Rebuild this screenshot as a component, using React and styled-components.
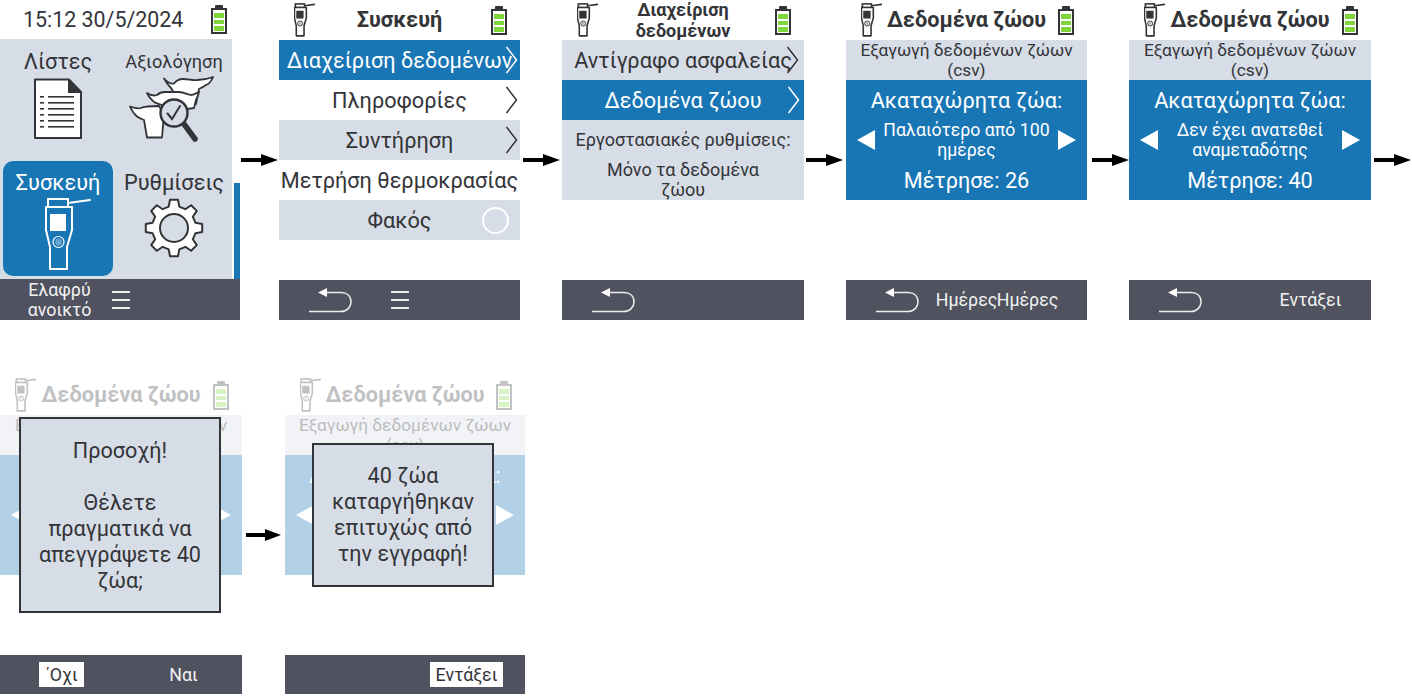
import React from "react";
import styled, { createGlobalStyle } from "styled-components";

const DARK = "#333438";
const GREY = "#d6dde6";
const BLUE = "#1976b5";
const BAR = "#50525f";

const GlobalStyle = createGlobalStyle`
  html, body {
    margin: 0;
    background: #fff;
    overflow: hidden;
  }
  body {
    font-family: Roboto, "Noto Sans", sans-serif;
    color: ${DARK};
  }
`;

const gearPath = (() => {
  const teeth = 8;
  const pts = [];
  for (let i = 0; i < teeth; i++) {
    const a = (i * Math.PI * 2) / teeth - Math.PI / 2;
    const step = Math.PI / teeth;
    const pt = (r, ang) => `${(30 + r * Math.cos(ang)).toFixed(1)} ${(30 + r * Math.sin(ang)).toFixed(1)}`;
    pts.push(pt(22, a - step * 0.62), pt(28.5, a - step * 0.36), pt(28.5, a + step * 0.36), pt(22, a + step * 0.62));
  }
  return `M${pts.join(" L")}Z`;
})();

const BatteryIcon = () => (
  <svg width="16" height="29" viewBox="0 0 16 29">
    <rect x="4" y="0" width="8" height="4" rx="1" fill={DARK} />
    <rect x="1" y="4" width="14" height="24" fill="#fff" stroke={DARK} strokeWidth="2" />
    <rect x="3" y="8" width="10" height="5" fill="#7ed63c" />
    <rect x="3" y="15" width="10" height="4" fill="#7ed63c" />
    <rect x="3" y="21" width="10" height="5" fill="#7ed63c" />
  </svg>
);

const DeviceIcon = ({ width, color, fill, screen, weight }) => (
  <svg width={width} viewBox="0 0 46 74" style={{ display: "block" }}>
    <path d="M23 6 L45 3" stroke={color} strokeWidth={weight} strokeLinecap="round" fill="none" />
    <rect x="3" y="2" width="20" height="8" fill={fill} stroke={color} strokeWidth={weight} />
    <path
      d="M1 10 H27 V33 L22 50 V72 H5 V50 L1 33Z"
      fill={fill}
      stroke={color}
      strokeWidth={weight}
      strokeLinejoin="round"
    />
    <rect x="5" y="17" width="16" height="17" fill={screen} />
    <circle cx="13.5" cy="45" r="5.5" fill="none" stroke={color} strokeWidth={weight * 0.6} />
    <circle cx="13.5" cy="45" r="3.4" fill={color} fillOpacity="0.35" />
  </svg>
);

const DocIcon = () => (
  <svg width="50" height="62" viewBox="0 0 50 62">
    <path d="M2 1.5 H36 L48 14 V60 H2Z" fill="#fff" stroke={DARK} strokeWidth="2" strokeLinejoin="round" />
    <path d="M35 1 L49 15 H35Z" fill={DARK} />
    {[18, 24, 30, 36, 42, 48].map((y) => (
      <g key={y}>
        <rect x="7" y={y} width="4" height="1.6" fill={DARK} />
        <rect x="15" y={y} width="26" height="1.6" fill={DARK} />
      </g>
    ))}
  </svg>
);

const CowsIcon = () => (
  <svg width="90" height="70" viewBox="0 0 90 70">
    <g fill="#fff" stroke={DARK} strokeWidth="1.8" strokeLinejoin="round">
      <path d="M35 2.5 C38 6 42 8 45 7.5 C47 5 50 3 54 3 C60 3 64 5 68 4 C73 4 79 3 84 1 C82 6 80 8 77 9 C74 11 72 12 70 13 L67 28 L52 28 L42 12 C39 9 37 6 35 2.5Z" />
      <path d="M18 17 C21 19 25 20 28 19 C30 17 33 16 36 16 L50 16 C54 16 58 18 62 19 C65 19 67 17 70 16 C69 20 68 22 67 24 L65 32 L38 36 L33 29 C29 28 25 27 23 24 C21 22 19 20 18 17Z" />
      <path d="M1 30.5 C5 32 9 33 12 32 C14 31 16 31 18 30.5 L30 30 L35 38 L33 61.5 L18 61.5 L15 44 C12 43 10 42 8 40.5 C5 38 3 35 1 30.5Z" />
    </g>
    <path d="M55 48 L66 63" stroke={DARK} strokeWidth="5.5" strokeLinecap="round" />
    <circle cx="45" cy="37" r="13.5" fill={GREY} stroke={DARK} strokeWidth="2.4" />
    <path d="M38.5 37.5 L43 43 L51 30" fill="none" stroke={DARK} strokeWidth="2" strokeLinecap="round" />
  </svg>
);

const GearIcon = () => (
  <svg width="60" height="60" viewBox="0 0 60 60">
    <path d={gearPath} fill="#fff" stroke={DARK} strokeWidth="2" strokeLinejoin="round" />
    <circle cx="30" cy="30" r="14" fill={GREY} stroke={DARK} strokeWidth="2" />
  </svg>
);

const BackSvg = styled.svg`
  margin-right: 16px;
  flex: none;
`;

const BackIcon = () => (
  <BackSvg width="44" height="26" viewBox="0 0 44 26">
    <path d="M0 24.5 H32 C38 24.5 42 20 42 15 C42 9 38 5.5 32 5.5 H16" fill="none" stroke="#eee" strokeWidth="1.5" />
    <path d="M9 5.5 L18 1 V10Z" fill="#fff" />
  </BackSvg>
);

const Burger = () => (
  <svg width="18" height="18" viewBox="0 0 18 18">
    <rect y="0" width="18" height="2" fill="#eee" />
    <rect y="8" width="18" height="2" fill="#eee" />
    <rect y="16" width="18" height="2" fill="#eee" />
  </svg>
);

const ArrowIcon = ({ width }) => (
  <svg width={width} height="12" viewBox="0 0 37 12" preserveAspectRatio="none">
    <rect x="0" y="4" width="22" height="4" fill="#000" />
    <path d="M20 0 L37 6 L20 12Z" fill="#000" />
  </svg>
);

const ChevronSvg = styled.svg`
  position: absolute;
  right: ${(p) => p.$right || 2}px;
  top: 6px;
`;

const Chevron = ({ right, color }) => (
  <ChevronSvg $right={right} width="13" height="28" viewBox="0 0 13 28">
    <path d="M1.5 1 L11.5 14 L1.5 27" fill="none" stroke={color} strokeWidth="1.5" />
  </ChevronSvg>
);

const Page = styled.div`
  display: flex;
  flex-direction: column;
  gap: 55px;
  width: 1412px;
  height: 697px;
  overflow: hidden;
`;

const Flow = styled.div`
  display: flex;
  align-items: center;
`;

const ArrowSlot = styled.div`
  flex: none;
  display: flex;
  align-items: center;
  width: ${(p) => p.$width}px;
  padding-left: ${(p) => p.$pad}px;
  box-sizing: border-box;
`;

const Screen = styled.div`
  position: relative;
  flex: none;
  width: ${(p) => p.$width}px;
  display: grid;
  grid-template-rows: ${(p) => p.$rows || "40px 240px 40px"};
`;

const Header = styled.div`
  display: flex;
  align-items: center;
  justify-content: space-between;
  padding: 0 13px 0 15px;
  opacity: ${(p) => (p.$faded ? 0.3 : 1)};
`;

const Clock = styled.div`
  font-size: 21.4px;
  padding-left: 8px;
`;

const Title = styled.div`
  flex: 1;
  margin-right: 7px;
  font-weight: 700;
  font-size: ${(p) => p.$size || 21.7}px;
  line-height: ${(p) => (p.$size ? "21px" : "40px")};
  text-align: center;
  white-space: nowrap;
`;

const Content = styled.div`
  display: flex;
  flex-direction: column;
  opacity: ${(p) => (p.$faded ? 0.33 : 1)};
`;

const Row = styled.div`
  position: relative;
  flex: none;
  height: 40px;
  box-sizing: border-box;
  display: flex;
  align-items: center;
  justify-content: center;
  font-size: ${(p) => p.$size || 21.7}px;
  line-height: ${(p) => (p.$size ? "20px" : "26px")};
  text-align: center;
  padding: ${(p) => (p.$size ? 0 : 2)}px ${(p) => p.$pad || 0}px 0;
  background: ${(p) => (p.$tone === "blue" ? BLUE : p.$tone === "grey" ? GREY : "transparent")};
  color: ${(p) => (p.$tone === "blue" ? "#fff" : DARK)};
`;

const Label = styled.span`
  white-space: nowrap;
`;

const Toggle = styled.span`
  position: absolute;
  right: 11px;
  top: 7px;
  width: 23px;
  height: 23px;
  border: 2px solid #fff;
  border-radius: 50%;
`;

const Selector = styled.div`
  display: flex;
  align-items: center;
  justify-content: space-between;
  width: 100%;
  height: 40px;
  padding: 0 11px;
  box-sizing: border-box;
  background: ${BLUE};
  color: #fff;
  font-size: 17.7px;
  line-height: 19.5px;
  text-align: center;
`;

const SelectorText = styled.div`
  flex: 1;
  padding: 1px 4px 0;
`;

const Triangle = styled.span`
  flex: none;
  width: 0;
  height: 0;
  border-top: 10px solid transparent;
  border-bottom: 10px solid transparent;
  ${(p) => (p.$dir === "left" ? "border-right: 18px solid #fff;" : "border-left: 18px solid #fff;")}
`;

const Footer = styled.div`
  display: grid;
  grid-template-columns: repeat(3, 61px);
  align-items: center;
  padding-left: ${(p) => p.$left || 29}px;
  background: ${BAR};
  color: #f2f2f2;
  font-size: 17.8px;
  line-height: 20px;
`;

const FootSlot = styled.div`
  grid-column: ${(p) => p.$col};
  display: flex;
  justify-content: center;
  text-align: center;
  white-space: nowrap;
`;

const FootButton = styled.span`
  flex: none;
  display: block;
  padding: 0 6px;
  line-height: 25px;
  background: #fff;
  color: ${DARK};
`;

const Menu = styled.div`
  display: flex;
`;

const MenuGrid = styled.div`
  flex: none;
  width: 232px;
  height: 240px;
  box-sizing: border-box;
  padding: 0 0 3px 3px;
  background: ${GREY};
  display: grid;
  grid-template-columns: 110px 1fr;
  grid-template-rows: 122px 115px;
  column-gap: 3px;
`;

const Tile = styled.div`
  display: flex;
  flex-direction: column;
  align-items: center;
  padding-top: ${(p) => p.$top}px;
  border-radius: 10px;
  background: ${(p) => (p.$active ? BLUE : "transparent")};
  color: ${(p) => (p.$active ? "#fff" : DARK)};
`;

const TileLabel = styled.div`
  font-size: ${(p) => p.$size || 21.8}px;
  line-height: 26px;
  margin-bottom: ${(p) => p.$gap || 0}px;
  white-space: nowrap;
`;

const TileDevice = styled.div`
  margin-left: 20px;
`;

const ScrollThumb = styled.div`
  align-self: flex-end;
  width: 6px;
  height: 96px;
  margin-left: 2px;
  background: ${BLUE};
`;

const Dialog = styled.div`
  position: absolute;
  left: ${(p) => p.$left}px;
  top: ${(p) => p.$top}px;
  width: ${(p) => p.$width}px;
  height: ${(p) => p.$height}px;
  box-sizing: border-box;
  padding-top: ${(p) => p.$pad}px;
  border: 2.5px solid ${DARK};
  background: ${GREY};
  font-size: 21.6px;
  line-height: 26px;
  text-align: center;
`;

const AnimalHeader = ({ faded }) => (
  <Header $faded={faded}>
    <DeviceIcon width={21} color={DARK} fill="#fff" screen={DARK} weight={3.5} />
    <Title>Δεδομένα ζώου</Title>
    <BatteryIcon />
  </Header>
);

const AnimalPanel = ({ faded, filter, count }) => (
  <Content $faded={faded}>
    <Row $tone="grey" $size={17.3}>
      Εξαγωγή δεδομένων ζώων (csv)
    </Row>
    <Row $tone="blue">Ακαταχώρητα ζώα:</Row>
    <Selector>
      <Triangle $dir="left" />
      <SelectorText>{filter}</SelectorText>
      <Triangle $dir="right" />
    </Selector>
    <Row $tone="blue">Μέτρησε: {count}</Row>
  </Content>
);

const Arrow = ({ width, pad, size = 37 }) => (
  <ArrowSlot $width={width} $pad={pad}>
    <ArrowIcon width={size} />
  </ArrowSlot>
);

const App = () => {
  return (
    <>
      <GlobalStyle />
      <Page>
        <Flow>
          <Screen $width={240} $rows="39px 240px 41px">
            <Header>
              <Clock>15:12 30/5/2024</Clock>
              <BatteryIcon />
            </Header>
            <Menu>
              <MenuGrid>
                <Tile $top={10}>
                  <TileLabel $gap={3}>Λίστες</TileLabel>
                  <DocIcon />
                </Tile>
                <Tile $top={10}>
                  <TileLabel $size={18.2} $gap={1}>
                    Αξιολόγηση
                  </TileLabel>
                  <CowsIcon />
                </Tile>
                <Tile $top={9} $active>
                  <TileLabel $gap={1}>Συσκευή</TileLabel>
                  <TileDevice>
                    <DeviceIcon width={46} color="#fff" fill="none" screen="#fff" weight={2} />
                  </TileDevice>
                </Tile>
                <Tile $top={9}>
                  <TileLabel $gap={2}>Ρυθμίσεις</TileLabel>
                  <GearIcon />
                </Tile>
              </MenuGrid>
              <ScrollThumb />
            </Menu>
            <Footer>
              <FootSlot $col={1}>
                Ελαφρύ
                <br />
                ανοικτό
              </FootSlot>
              <FootSlot $col={2}>
                <Burger />
              </FootSlot>
            </Footer>
          </Screen>
          <Arrow width={39} pad={1} />

          <Screen $width={241}>
            <Header>
              <DeviceIcon width={21} color={DARK} fill="#fff" screen={DARK} weight={3.5} />
              <Title>Συσκευή</Title>
              <BatteryIcon />
            </Header>
            <Content>
              <Row $tone="blue">
                <Label>Διαχείριση δεδομένων</Label>
                <Chevron color="#fff" />
              </Row>
              <Row>
                <Label>Πληροφορίες</Label>
                <Chevron color={DARK} />
              </Row>
              <Row $tone="grey">
                <Label>Συντήρηση</Label>
                <Chevron color={DARK} />
              </Row>
              <Row>
                <Label>Μετρήση θερμοκρασίας</Label>
              </Row>
              <Row $tone="grey">
                <Label>Φακός</Label>
                <Toggle />
              </Row>
            </Content>
            <Footer>
              <FootSlot $col={1}>
                <BackIcon />
              </FootSlot>
              <FootSlot $col={2}>
                <Burger />
              </FootSlot>
            </Footer>
          </Screen>
          <Arrow width={42} pad={3} />

          <Screen $width={242}>
            <Header>
              <DeviceIcon width={21} color={DARK} fill="#fff" screen={DARK} weight={3.5} />
              <Title $size={18}>
                Διαχείριση
                <br />
                δεδομένων
              </Title>
              <BatteryIcon />
            </Header>
            <Content>
              <Row $tone="grey">
                <Label>Αντίγραφο ασφαλείας</Label>
                <Chevron color={DARK} right={5} />
              </Row>
              <Row $tone="blue">
                <Label>Δεδομένα ζώου</Label>
                <Chevron color="#fff" right={4} />
              </Row>
              <Row $tone="grey" $size={18}>
                <Label>Εργοστασιακές ρυθμίσεις:</Label>
              </Row>
              <Row $tone="grey" $size={18} $pad={30}>
                Μόνο τα δεδομένα ζώου
              </Row>
            </Content>
            <Footer>
              <FootSlot $col={1}>
                <BackIcon />
              </FootSlot>
            </Footer>
          </Screen>
          <Arrow width={42} pad={2} />

          <Screen $width={241}>
            <AnimalHeader />
            <AnimalPanel filter="Παλαιότερο από 100 ημέρες" count={26} />
            <Footer>
              <FootSlot $col={1}>
                <BackIcon />
              </FootSlot>
              <FootSlot $col={2}>Ημέρες</FootSlot>
              <FootSlot $col={3}>Ημέρες</FootSlot>
            </Footer>
          </Screen>
          <Arrow width={42} pad={5} />

          <Screen $width={242}>
            <AnimalHeader />
            <AnimalPanel filter="Δεν έχει ανατεθεί αναμεταδότης" count={40} />
            <Footer>
              <FootSlot $col={1}>
                <BackIcon />
              </FootSlot>
              <FootSlot $col={3}>Εντάξει</FootSlot>
            </Footer>
          </Screen>
          <Arrow width={41} pad={3} />
        </Flow>

        <Flow>
          <Screen $width={242} $rows="40px 240px 39px">
            <AnimalHeader faded />
            <AnimalPanel faded filter="Δεν έχει ανατεθεί αναμεταδότης" count={40} />
            <Footer $left={31}>
              <FootSlot $col={1}>
                <FootButton>΄Οχι</FootButton>
              </FootSlot>
              <FootSlot $col={3}>Ναι</FootSlot>
            </Footer>
            <Dialog $left={19} $top={42} $width={202} $height={196} $pad={19}>
              Προσοχή!
              <br />
              <br />
              Θέλετε
              <br />
              πραγματικά να
              <br />
              απεγγράψετε 40
              <br />
              ζώα;
            </Dialog>
          </Screen>
          <Arrow width={43} pad={4} size={35} />

          <Screen $width={240} $rows="40px 240px 39px">
            <AnimalHeader faded />
            <AnimalPanel faded filter="Δεν έχει ανατεθεί αναμεταδότης" count={40} />
            <Footer>
              <FootSlot $col={3}>
                <FootButton>Εντάξει</FootButton>
              </FootSlot>
            </Footer>
            <Dialog $left={27} $top={68} $width={182} $height={144} $pad={18}>
              40 ζώα
              <br />
              καταργήθηκαν
              <br />
              επιτυχώς από
              <br />
              την εγγραφή!
            </Dialog>
          </Screen>
        </Flow>
      </Page>
    </>
  );
};

export default App;
